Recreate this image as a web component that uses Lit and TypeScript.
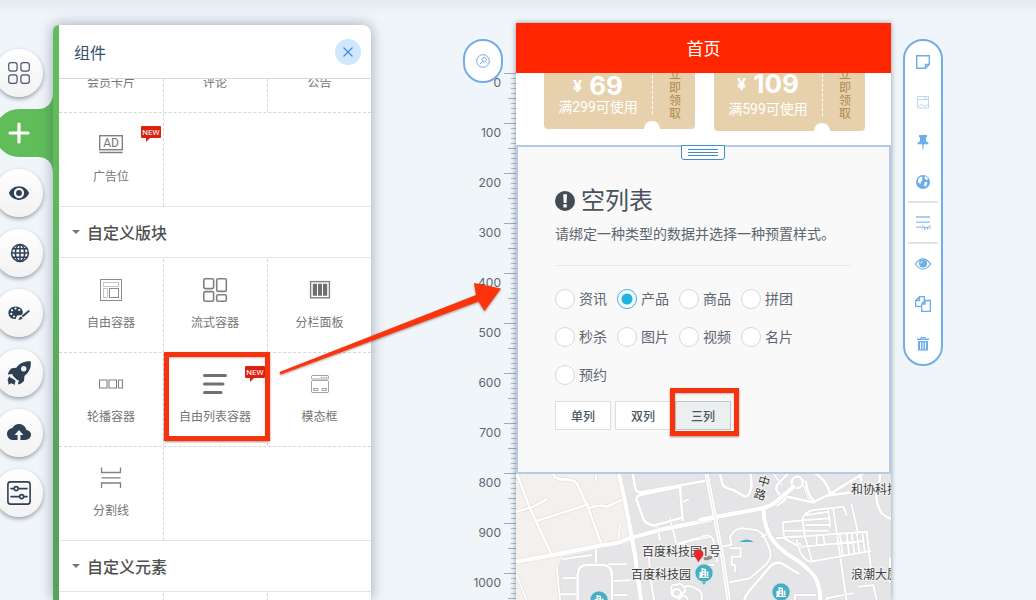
import { LitElement, html, css, svg, nothing } from "lit";
import { customElement, state } from "lit/decorators.js";

const FONT = css`Roboto, "Noto Sans CJK SC", sans-serif`;

const reset = css`
  *, *::before, *::after { box-sizing: border-box; }
  button { font: inherit; color: inherit; padding: 0; margin: 0; border: 0; background: none; cursor: pointer; }
  svg { display: block; overflow: visible; }
`;

/* ---------- left dock ---------- */

const dockIcons = [
  {
    name: "版块",
    art: svg`<g fill="none" stroke="#4a5768" stroke-width="1.2"><rect x="1.700" y="1.700" width="8.400" height="8.400" rx="2.400"/><rect x="13.900" y="1.700" width="8.400" height="8.400" rx="2.400"/><rect x="1.700" y="13.900" width="8.400" height="8.400" rx="2.400"/><rect x="13.900" y="13.900" width="8.400" height="8.400" rx="2.400"/></g>`,
  },
  {
    name: "添加组件",
    active: true,
    art: svg`<path d="M12 3v18M3 12h18" fill="none" stroke="#fff" stroke-width="3.200" stroke-linecap="round"/>`,
  },
  {
    name: "预览",
    art: svg`<path transform="translate(1 1) scale(.917)" d="M12 4.500C7 4.500 2.730 7.610 1 12c1.730 4.390 6 7.500 11 7.500s9.270-3.110 11-7.500c-1.730-4.390-6-7.500-11-7.500zM12 17.600a5.600 5.600 0 1 1 0-11.200 5.600 5.600 0 0 1 0 11.200zm0-8.800a3.200 3.200 0 1 0 0 6.400 3.200 3.200 0 0 0 0-6.400z"/>`,
  },
  {
    name: "站点",
    art: svg`<g fill="none" stroke="#2e4154" stroke-width="1.500"><circle cx="13" cy="12" r="8.400"/><ellipse cx="13" cy="12" rx="4.600" ry="8.400"/><path d="M13 3.600v16.800M4.600 12h16.800M5.600 7.800h14.800M5.600 16.200h14.800"/></g>`,
  },
  {
    name: "样式",
    art: svg`<path d="M8.600 5.400c-4.200 0-7.200 2.900-7.200 6.400 0 3.800 3.200 6.600 6.400 6.200 2-.2 1-2.100 2.100-3.100 1.300-1.100 4.200.2 5.700-2.100 1.200-3.600-2-7.400-7-7.400z"/><g fill="#fff"><circle cx="5" cy="9.300" r="1.100"/><circle cx="8.500" cy="7.600" r="1.100"/><circle cx="12.200" cy="9" r="1.100"/><circle cx="4.300" cy="12.900" r="1.100"/><circle cx="7" cy="15.500" r="1"/></g><path d="M22.400 9.400c.5.500.3.900 0 1.300l-6.300 5.500-1.400-1.400 6.300-5.200c.5-.5 1-.6 1.400-.2zM14.300 15.600l1.200 1.300c-.5 1.500-2.200 2.100-4.300 1.500 1.200-.6 1.200-2.500 3.100-2.800z"/>`,
  },
  {
    name: "发布",
    art: svg`<path fill-rule="evenodd" d="M23.800.3C17 0 12.400 2.400 9.300 6.700L4.900 7.200C3.600 7.600 1.300 11 .9 13.500l4.800-.5c-.3 1-.1 1.600.6 2.300l3.300 3.200c.7.700 1.300.9 2.200.6l-.9 4.500c2.700-.8 5.600-2.500 6.100-3.900l.5-4.800C21.900 11.700 24.400 7 23.800.3zM16.700 10.500a2.700 2.700 0 1 1 0-5.400 2.700 2.700 0 0 1 0 5.400z"/><path d="M2.600 15c-.6 1.700-2.600 2.600-1.600 5 .5 1.200.1 2 .6 3.800 1-1 1.700-1.300 2.900-1.300 1.300 0 2 1.300 3.600 1.200-.7-1-.2-1.500.2-2.500.5-1.300-.2-2.200-1.300-2.600-1.100-.4-1-1.300-2.200-1.400-1.200 0-1.800-1.200-2.200-2.200z"/>`,
  },
  {
    name: "上传",
    art: svg`<path d="M19.350 9.040C18.670 5.590 15.640 3 12 3 9.110 3 6.600 4.640 5.350 7.040 2.340 7.360 0 9.910 0 13c0 3.310 2.690 6 6 6h4.600v-5H7.600l4.400-5 4.400 5h-3v5H18c3.300 0 6-2.240 6-5.400 0-2.400-2.050-4.380-4.650-4.560z"/>`,
  },
  {
    name: "设置",
    art: svg`<g fill="none" stroke="#2e4154" stroke-width="1.600" stroke-linecap="round"><rect x=".9" y=".9" width="22.200" height="22.200" rx="2.600"/><path d="M4 7.600h2.800M11.600 7.600H20M4 15.600h8.400M17 15.600h3"/><circle cx="9.200" cy="7.600" r="2"/><circle cx="14.700" cy="15.600" r="2"/></g>`,
  },
];

@customElement("side-dock")
class SideDock extends LitElement {
  static styles = [
    reset,
    css`
      :host { display: block; width: 53px; flex: none; padding-top: 49px; }
      .list { display: flex; flex-direction: column; gap: 12px; margin-left: -5px; }
      .item {
        width: 48px; height: 48px; border-radius: 50%;
        display: grid; place-items: center;
        background: linear-gradient(#ffffff, #f2f2f3);
        box-shadow: 0 2px 4px rgba(40, 50, 70, 0.45);
        fill: #2e4154;
      }
      .item.active { background: none; box-shadow: none; width: 58px; padding-right: 10px; border-radius: 0; }
      .item > * { grid-area: 1 / 1; }
      .tab { justify-self: start; width: 58px; height: 48px; margin-right: -10px; }
    `,
  ];
  render() {
    return html`<nav class="list" aria-label="工具">
      ${dockIcons.map(
        (i) => html`<button class="item ${i.active ? "active" : ""}" aria-label=${i.name}>
          ${i.active
            ? html`<svg class="tab" viewBox="0 0 58 48"><path fill="#60bd5a" d="M24 0h19c9 0 15-6 15-16v80c0-10-6-16-15-16H24a24 24 0 0 1 0-48z" /></svg>`
            : nothing}
          <svg width="24" height="24" viewBox="0 0 24 24">${i.art}</svg>
        </button>`
      )}
    </nav>`;
  }
}

/* ---------- component panel ---------- */

type Cell = { label: string; art?: unknown; isNew?: boolean; marked?: boolean };

const line = (body: unknown, w = 1.4, color = "#808080") =>
  svg`<g fill="none" stroke="${color}" stroke-width="${w}">${body}</g>`;

const topRows: Cell[][] = [
  [{ label: "会员卡片" }, { label: "评论" }, { label: "公告" }],
  [
    {
      label: "广告位",
      isNew: true,
      art: svg`${line(svg`<rect x=".7" y="3.700" width="22.600" height="14"/><path d="M.5 20.500h23"/>`)}<text class="ad" x="12" y="15" text-anchor="middle">AD</text>`,
    },
  ],
];

const blockRows: Cell[][] = [
  [
    {
      label: "自由容器",
      art: svg`${line(svg`<rect x="1.500" y="1.500" width="21" height="21"/><rect x="10.500" y="10.500" width="9" height="9"/>`, 1, "#8c8c8c")}${line(svg`<path stroke-dasharray="1 1" d="M4.500 4.500h15v4h-15zM4.500 10.500h4v9h-4z"/>`, 1, "#8c8c8c")}`,
    },
    {
      label: "流式容器",
      art: line(svg`<rect x=".8" y=".8" width="9.800" height="9.800" rx="1.500"/><rect x="13.700" y=".8" width="9.600" height="12.600" rx="1.500"/><rect x=".8" y="13.600" width="9.800" height="9.600" rx="1.500"/><rect x="13.700" y="16.700" width="9.600" height="6.500" rx="1.500"/>`, 1.6),
    },
    {
      label: "分栏面板",
      art: svg`${line(svg`<rect x="2.600" y="3.600" width="18.800" height="16.200"/>`, 1.4)}<path fill="#6e6e6e" d="M4.800 5.800h4.200v12H4.800zM10 5.800h4v12h-4zM15 5.800h4.200v12H15z"/>`,
    },
  ],
  [
    {
      label: "轮播容器",
      art: line(svg`<path d="M.5 8h7.500v8H.5zM10 8h7.500v8H10zM19.500 8h4v8h-4z"/>`, 1.1),
    },
    {
      label: "自由列表容器",
      isNew: true,
      marked: true,
      art: svg`<path d="M1.500 3.500h21M1.500 12H20M1.500 20.500h16.500" stroke="#707070" stroke-width="3" stroke-linecap="round"/>`,
    },
    {
      label: "模态框",
      art: line(svg`<rect x="3.500" y="3.500" width="17" height="3.500" rx="1"/><rect x="3.500" y="8.500" width="17" height="12" rx="1"/><path d="M5.500 16.500h4.500v2H5.500zM14 16.500h4.500v2H14zM13 5.300h1.500M15.600 5.300h1.500M18 5.300h1.400"/>`, 0.8, "#8c8c8c"),
    },
  ],
  [
    {
      label: "分割线",
      art: line(svg`<path d="M2.500 1.500v5h19v-5M2.500 22v-5h19v5M2.500 11.800h19"/>`, 1.3),
    },
  ],
];

const elementRows: Cell[][] = [[{ label: "" }, { label: "" }, { label: "" }]];

@customElement("component-panel")
class ComponentPanel extends LitElement {
  static styles = [
    reset,
    css`
      :host {
        display: flex; flex: none; width: 318px; margin-top: 25px; padding-left: 6px; overflow: hidden;
        border-radius: 6px 8px 0 0; position: relative;
        background: linear-gradient(#60bd5a 20%, #54a45b 75%);
        box-shadow: 0 0 14px rgba(50, 70, 105, 0.45);
      }
      .sheet { flex: 1; background: #fff; display: flex; flex-direction: column; min-width: 0; }
      .head {
        height: 54px; flex: none; display: flex; align-items: center; justify-content: space-between;
        padding: 0 10px 0 15px; border-bottom: 1px solid #d3d9e2;
      }
      .head h1 { margin: 0; font-size: 16px; font-weight: 400; color: #34506c; }
      .close { width: 26px; height: 26px; border-radius: 50%; background: #cfe8fd; display: grid; place-items: center; }
      .body { flex: 1; overflow: hidden; min-height: 0; }
      .scrolled { margin-top: -60px; }
      .row {
        display: grid; grid-template-columns: repeat(3, 1fr); height: 94px;
        border-bottom: 1px dashed #d6d6d6;
      }
      .row:last-child { border-bottom: 1px solid #e2e4e7; }
      .cell {
        position: relative; display: flex; flex-direction: column; align-items: center; gap: 13px;
        padding-top: 19px; margin-right: -1px; border-right: 1px dashed #d6d6d6;
        font-size: 12px; line-height: 16px; color: #757575;
      }
      .cell:nth-child(3) { border-right: 0; }
      .icon { width: 24px; height: 24px; }
      .ad { font-size: 12px; fill: #757575; }
      .new {
        position: absolute; right: 2px; top: 13px; width: 20px; height: 12px; border-radius: 1px;
        background: #d8220f; color: #fff; font-size: 8px; line-height: 13px; text-align: center;
      }
      .new::after {
        content: ""; position: absolute; left: 5px; top: 12px;
        border-top: 4px solid #d8220f; border-right: 4px solid transparent;
      }
      .marker {
        position: absolute; inset: -1px -3px 5px 1px; border: 5px solid #f5330f;
        box-shadow: 0 1px 2px rgba(90, 30, 20, 0.5), inset 0 1px 2px rgba(90, 30, 20, 0.3);
      }
      h2 {
        margin: 0; height: 51px; display: flex; align-items: center; gap: 7px; padding-left: 13px;
        border-bottom: 1px solid #e2e4e7; font-size: 16px; font-weight: 500; color: #505050;
      }
      h2::before { content: ""; border: 4px solid transparent; border-top-color: #777; border-bottom: 0; }
      .group { padding-top: 1px; }
    `,
  ];

  private rows(rows: Cell[][]) {
    return rows.map(
      (r) => html`<div class="row">
        ${r.map(
          (c) => html`<button class="cell">
            <svg class="icon" viewBox="0 0 24 24">${c.art ?? nothing}</svg>
            <span>${c.label}</span>
            ${c.isNew ? html`<span class="new">NEW</span>` : nothing}
            ${c.marked ? html`<span class="marker"></span>` : nothing}
          </button>`
        )}
      </div>`
    );
  }

  render() {
    return html`<section class="sheet">
      <header class="head">
        <h1>组件</h1>
        <button class="close" aria-label="关闭">
          <svg width="10" height="10" viewBox="0 0 10 10"><path d="M.5.5l9 9M9.500.5l-9 9" stroke="#3f8fdc" stroke-width="1.200" /></svg>
        </button>
      </header>
      <div class="body">
        <div class="scrolled">${this.rows(topRows)}</div>
        <h2>自定义版块</h2>
        <div class="group">${this.rows(blockRows)}</div>
        <h2>自定义元素</h2>
        <div class="group">${this.rows(elementRows)}</div>
      </div>
    </section>`;
  }
}

/* ---------- ruler ---------- */

@customElement("page-ruler")
class PageRuler extends LitElement {
  static styles = [
    reset,
    css`
      :host { display: flex; flex-direction: column; align-items: flex-end; height: 100%; }
      .zoom {
        flex: none; width: 40px; height: 44px; border-radius: 20px; border: 2px solid #74ade5; background: #fff;
        display: grid; place-items: center; margin: 39px 13px 0 0;
      }
      .scale {
        flex: 1; min-height: 0; width: 46px; margin: -10px 0 0; padding: 1px 15px 0 0; overflow: hidden;
        font: 12px/18px Inter, sans-serif; color: #5d6670; text-align: right;
        background:
          repeating-linear-gradient(#a3abb3 0 1px, transparent 1px 50px) right / 12px 100% no-repeat,
          repeating-linear-gradient(#a3abb3 0 1px, transparent 1px 25px) right / 8px 100% no-repeat,
          repeating-linear-gradient(#b3bac2 0 1px, transparent 1px 5px) right / 5px 100% no-repeat;
      }
      .mark { height: 50px; }
    `,
  ];
  render() {
    return html`<button class="zoom" aria-label="缩放">
        <svg width="14" height="14" viewBox="0 0 14 14" fill="none" stroke="#74ade5" stroke-width="1">
          <circle cx="7" cy="7" r="6.300" /><circle cx="8.200" cy="5.700" r="2.200" /><path d="M6.600 7.300L4 10" />
        </svg>
      </button>
      <div class="scale">${Array.from({ length: 11 }, (_, i) => html`<div class="mark">${i * 100}</div>`)}</div>`;
  }
}

/* ---------- map ---------- */

@customElement("city-map")
class CityMap extends LitElement {
  static styles = css`
    :host { display: block; height: 260px; background: #e5e5e7; overflow: hidden; }
    svg { display: block; }
    .road { fill: none; stroke: #fff; stroke-linejoin: round; stroke-linecap: round; }
    .edge { fill: none; stroke: #d9d9dc; stroke-linejoin: round; stroke-linecap: round; }
    text { font-size: 12px; fill: #3c3c3c; stroke: #f4f4f4; stroke-width: 2px; paint-order: stroke; }
  `;

  private roads(d: string, w: number) {
    return svg`<path class="edge" stroke-width="${w + 3}" d="${d}"/><path class="road" stroke-width="${w}" d="${d}"/>`;
  }

  private pin(x: number, y: number) {
    return svg`<g transform="translate(${x} ${y})">
      <path fill="#3fa7bd" stroke="#bfe0e8" stroke-width=".6" d="M-3 8L0 12 3 8z"/>
      <circle r="9" fill="#48aec4" stroke="#d2eaf0" stroke-width=".6"/>
      <path fill="#fff" fill-rule="evenodd" d="M-2.500-5L2-4V4H5V5H-5V4H-4.500V-1H-2.500zM-1.200-3v1.300H.6V-3zM-1.200-.5V.8H.6V-.5zM-1.200 2v2H.6V2zM2.600-1.500H4.400V3.500H2.600z"/></g>`;
  }

  render() {
    return html`<svg width="375" height="260" viewBox="0 0 375 260" role="img" aria-label="地图">
      <g transform="translate(-6 -9) scale(.33333)">
        <path fill="#f3f0ee" d="M18 25H325L365 232 280 250 160 275Q142 290 145 330L150 820H18z" />
        ${this.roads("M20 330L50 405M140 305L150 405M160 282L245 270M258 245V300M160 340L200 338M155 388H200M295 298H350M308 348L360 346M308 390H350M330 180L325 225M415 240L420 330 432 405M440 175L450 225M480 160L500 240M510 115L535 103M258 25V47", 6)}
        ${this.roads("M20 25L60 130 125 270M20 140L70 125 110 103M80 168L235 118M130 25Q130 45 175 44 200 45 205 65L235 130 275 240M240 128Q270 118 290 125L335 105M203 480V330Q205 300 230 300H280Q305 302 306 330V480M368 25L375 65Q376 80 390 82L600 45M515 158L430 182Q400 175 398 155L380 105Q378 90 400 88L510 65 518 165M500 240Q550 220 600 215", 8)}
        ${this.roads("M20 290L130 270 280 240Q330 235 350 222L450 195 600 165M325 20L345 110 375 270 395 420", 13)}
        ${this.roads("M485 375Q480 355 500 360 510 350 520 365 535 380 515 385 520 400 500 398 480 395 485 375M520 365Q545 360 555 370 580 375 575 405M500 372A12 12 0 1 0 501 372M520 392A12 12 0 1 0 521 392", 6)}
      </g>
      <g transform="translate(184 -9) scale(.33333)">
        ${this.roads("M90 215Q105 190 125 190L170 195 185 205Q215 250 211 275 205 295 190 305L150 340 90 352M90 215L95 240 60 245M185 215L205 205M90 250H122V275H95V300H105V320M220 25L245 60M310 60L330 110M5 215Q30 205 40 225L45 260M10 300H40M285 405V390H345M380 420V400L460 385M475 365L520 360 530 405M570 280V350M300 235V260M50 250V290", 6)}
        ${this.roads("M250 172L315 165M250 197H385M250 217L305 214M318 165L390 160M318 180H390M320 150L385 140M250 170Q245 190 255 222L290 240M315 220L308 165Q310 142 340 135L430 125 440 150M385 135L390 185M400 133L420 270 440 410M455 120L473 200M230 220L500 200 514 320M290 225Q300 280 330 290L512 258M305 245L490 228M318 225L335 285M350 215V240M420 210L428 268M440 208L447 265M455 206L463 262M470 204L478 260M487 203L494 258M370 215L375 240", 6)}
        ${this.roads("M60 25L68 60Q75 70 100 75L135 95Q150 95 155 60L152 25M215 118Q235 112 240 90 220 70 235 55L265 25M215 120Q240 125 260 95L340 112 380 92 470 80Q490 55 480 25M345 25Q380 45 390 85M318 50Q320 90 345 110M385 90L490 25M540 25Q540 55 530 80 525 110 545 145 560 160 590 165M130 420Q130 400 150 375L210 305Q230 285 250 298L295 325", 8)}
        <circle class="edge" cx="292" cy="52" r="17" stroke-width="11" /><circle class="road" cx="292" cy="52" r="17" stroke-width="8" />
        ${this.roads("M0 165L185 130Q215 125 240 100L280 66M18 20L40 130 68 280 88 420M190 128Q190 190 225 235 260 270 290 285 340 320 352 350 362 380 362 420", 13)}
        <path d="M18 20L40 130 68 280 88 420" fill="none" stroke="#d6d6d9" stroke-width="1.500" />
      </g>
      <path d="M223 68q7.500-5 15 0z" fill="#48aec4" />
      <ellipse cx="192" cy="84" rx="4.500" ry="2" fill="#8f8f8f" transform="rotate(-12 192 84)" />
      <text x="126" y="82">百度科技园1号</text>
      <text x="115" y="105">百度科技园</text>
      <text x="335" y="20">和协科技大厦</text>
      <text x="335" y="105">浪潮大厦</text>
      <text transform="translate(241 10) rotate(16)">中</text>
      <text transform="translate(237 23) rotate(16)">路</text>
      ${this.pin(188, 99)} ${this.pin(265, 118)} ${this.pin(83, 126)}
      <path d="M182.500 88.500C181 85 178 83 178 80a4.700 4.700 0 0 1 9.400 0c0 3-3.400 5-4.900 8.500z" fill="#e8262b" />
    </svg>`;
  }
}

/* ---------- phone preview ---------- */

@customElement("phone-preview")
class PhonePreview extends LitElement {
  @state() private kind = "产品";
  @state() private columns = "三列";

  static styles = [
    reset,
    css`
      :host {
        display: flex; flex-direction: column; width: 375px; margin-top: 23px; background: #fff;
        box-shadow: 0 0 5px rgba(50, 60, 80, 0.5); overflow: hidden;
      }
      .bar {
        flex: none; height: 50px; padding-bottom: 2px; background: #ff2600; color: #fff; display: grid; place-items: center;
        font-size: 17px;
      }
      .bar h1 { margin: 0; font: inherit; }
      .coupons { flex: none; height: 72px; overflow: hidden; display: flex; align-items: flex-end; gap: 19px; padding: 0 26px 16px 28px; }
      .coupon {
        position: relative; flex: 1; height: 84px; display: flex; background: #e7d1ac; border-radius: 4px; color: #fff;
      }
      .coupon.low { margin-bottom: -2px; height: 86px; }
      .value { flex: 1; display: flex; flex-direction: column; justify-content: flex-end; align-items: center; padding-bottom: 12px; }
      .amount { font: 700 26px/22px Inter, sans-serif; display: flex; align-items: center; gap: 7px; }
      .low .amount { margin-bottom: 4px; }
      .yen { font-size: 16px; }
      .rule { font-size: 14px; line-height: 20px; }
      .take {
        width: 43px; border-left: 1px dashed #fff; margin-bottom: 15px; padding: 24px 14px 0 16px;
        font-size: 12px; line-height: 13px; color: #ae8a4f; text-align: center; word-break: break-all;
      }
      .coupon::after {
        content: ""; position: absolute; right: 35px; bottom: -8px; width: 16px; height: 16px; border-radius: 50%; background: #fff;
      }
      .block {
        position: relative; flex: none; border: 2px solid #b3cbe7; background: #f9f9f9; padding: 37px 38px 42px 37px; color: #5c6670;
      }
      .grip {
        position: absolute; left: 50%; top: -2px; margin-left: -23px; width: 44px; height: 15px; background: #fff;
        border: 1px solid #3d8fc4; border-radius: 0 0 3px 3px;
        display: flex; flex-direction: column; justify-content: center; gap: 2px; padding: 0 6px;
      }
      .grip i { height: 1px; background: #3d8fc4; }
      .title { display: flex; align-items: center; gap: 6px; margin: 0; font-size: 24px; line-height: 34px; font-weight: 400; color: #48535c; }
      .hint { margin: 6px 0 0; font-size: 14px; line-height: 20px; }
      hr { margin: 21px 0 23px; border: 0; border-top: 1px solid #e9e9e9; }
      .kinds { display: flex; flex-wrap: wrap; gap: 18px 10px; margin: 0; padding: 0; border: 0; }
      .kinds label { display: flex; align-items: center; gap: 4px; font-size: 14px; line-height: 20px; }
      .kinds input {
        appearance: none; margin: 0; width: 20px; height: 20px; border-radius: 50%;
        border: 1px solid #d2d9dd; background: #fff;
      }
      .kinds input:checked { border-color: #2bb3e3; background: radial-gradient(circle, #21b2e4 5px, #fff 6px); }
      .cols { display: flex; gap: 4px; margin-top: 16px; }
      .cols button {
        position: relative; width: 56px; height: 29px; border: 1px solid #dadfe2; background: #fff;
        font-size: 12px; font-weight: 500; color: #4c565e;
      }
      .cols .on { background: #ebeff0; border-color: #bcc7cb; }
      .marker {
        position: absolute; inset: -14px -9px -7px -6px; border: 5px solid #f5330f;
        box-shadow: 0 1px 2px rgba(90, 30, 20, 0.5), inset 0 1px 2px rgba(90, 30, 20, 0.3);
      }
    `,
  ];

  private coupon(price: string, rule: string, low = false) {
    return html`<div class="coupon ${low ? "low" : ""}">
      <div class="value">
        <div class="amount"><span class="yen">¥</span><span>${price}</span></div>
        <div class="rule">${rule}</div>
      </div>
      <div class="take">立即领取</div>
    </div>`;
  }

  render() {
    const kinds = ["资讯", "产品", "商品", "拼团", "秒杀", "图片", "视频", "名片", "预约"];
    return html`<header class="bar"><h1>首页</h1></header>
      <div class="coupons">${this.coupon("69", "满299可使用")}${this.coupon("109", "满599可使用", true)}</div>
      <section class="block">
        <div class="grip"><i></i><i></i><i></i></div>
        <h2 class="title">
          <svg width="20" height="20" viewBox="0 0 20 20"><circle cx="10" cy="10" r="10" fill="#414c55" /><path d="M8.200 3.200h3.800l-.5 8.700H8.700zM8.400 13.300h3.400v3.200H8.400z" fill="#fff" /></svg>
          空列表
        </h2>
        <p class="hint">请绑定一种类型的数据并选择一种预置样式。</p>
        <hr />
        <div class="kinds" role="radiogroup">
          ${kinds.map(
            (k) => html`<label><input type="radio" name="kind" .checked=${this.kind === k} @change=${() => (this.kind = k)} />${k}</label>`
          )}
        </div>
        <div class="cols">
          ${["单列", "双列", "三列"].map(
            (c) => html`<button class=${this.columns === c ? "on" : ""} @click=${() => (this.columns = c)}>
              ${c}${c === "三列" ? html`<span class="marker"></span>` : nothing}
            </button>`
          )}
        </div>
      </section>
      <city-map></city-map>`;
  }
}

/* ---------- right tool bar ---------- */

const tools = [
  { name: "便签", art: svg`<path fill="none" stroke="#6dade8" stroke-width="1.400" d="M1.700 1.700h12.600v8.800l-3.800 3.800H1.700zM14.300 10.500h-3.800v3.800"/>` },
  { name: "弹窗", art: svg`<g fill="none" stroke="#bcd8f2" stroke-width="1"><path d="M2.500 2.500h11v11.500h-11zM2.500 5.500h11M3 12.500q3-3.500 5-1t5-1"/><path stroke-width="1.500" d="M9 4h1M11 4h1"/></g>` },
  { name: "固定", art: svg`<path d="M4 1h8v2.200h-1v4c1.600.6 2.500 1.700 2.600 3.100H8.800L8.300 15.500h-.6L7.200 10.300H2.400c.1-1.400 1-2.500 2.600-3.100v-4H4z"/>` },
  { name: "全局", art: svg`<circle cx="8" cy="8" r="7"/><path fill="#fff" d="M3.600 4.200l2.500-1.700 1.600.9-1 1.700 1 .9-2 1.800.2 1.900-1.900-.5-1.200-2zM9.800 2l2.600 1.500.8 1.600-1.700.8-1.900-1.400zM9.800 8l2.500.2-.3 2.600-2.100 2-.8-1.900z"/>`, end: true },
  { name: "隐藏列表", art: svg`<g fill="none" stroke="#8fbfec" stroke-width="1.300"><path d="M1 2h14M1 7.200h14M1 12.200h5.500"/><path stroke="#6dade8" stroke-width="1" d="M7 10.500q4 4.500 8.500 0M8 12l-1 1.700M10 13l-.4 1.800M12.600 13l.4 1.800M14.500 11.800l1.200 1.700"/></g>`, end: true },
  { name: "查看", art: svg`<path fill="#fff" stroke="#6dade8" stroke-width="1.200" d="M.4 8Q8-2.400 15.600 8 8 18.400.4 8z"/><circle cx="8" cy="7.600" r="4"/><path fill="none" stroke="#fff" stroke-width=".9" d="M5.800 7.600A2.200 2.200 0 0 1 7.800 5.500"/>` },
  { name: "复制", art: svg`<g fill="#fff" stroke="#6dade8" stroke-width="1.300"><path d="M4.500.7h4.800v9.600H.7V4.500zM4.500.7v3.800H.7"/><path d="M10 4.500h5.300v10.800H6.700V8zM10 4.500V8H6.700"/></g>` },
  { name: "删除", art: svg`<path fill-rule="evenodd" d="M5.500 1h5v1.500H14V4H2V2.500h3.500zM6.500 2v.6h3V2zM3 5h10v9.500H3zM5 6.200v7h1v-7zM7.500 6.200v7h1v-7zM10 6.200v7h1v-7z"/>` },
];

@customElement("tool-strip")
class ToolStrip extends LitElement {
  static styles = [
    reset,
    css`
      :host { display: block; margin: 39px 0 0 12px; }
      .strip {
        width: 40px; border: 2px solid #74ade5; border-radius: 20px; background: #fff; padding: 1px 3px 0;
        display: flex; flex-direction: column; fill: #6dade8;
      }
      .tool { height: 40px; display: grid; place-items: center; }
      .tool.end { height: 41px; border-bottom: 2px solid #e2e2e2; }
    `,
  ];
  render() {
    return html`<div class="strip" role="toolbar">
      ${tools.map(
        (t) => html`<button class="tool ${t.end ? "end" : ""}" aria-label=${t.name}>
          <svg width="16" height="16" viewBox="0 0 16 16">${t.art}</svg>
        </button>`
      )}
    </div>`;
  }
}

/* ---------- page ---------- */

@customElement("app-root")
class AppRoot extends LitElement {
  static styles = [
    reset,
    css`
      :host {
        display: flex; position: relative; height: 100vh; overflow: hidden; font-family: ${FONT};
        background: linear-gradient(#e5eaee, #f0f5f9 16px);
      }
      .work { flex: 1; min-width: 0; display: grid; grid-template-columns: 1fr auto 1fr; grid-template-rows: 100vh; }
      .tools { display: flex; align-items: flex-start; }
      .arrow { position: absolute; left: 278px; top: 280px; filter: drop-shadow(0 1px 1px rgba(90, 40, 20, 0.5)); }
    `,
  ];
  render() {
    return html`<side-dock></side-dock>
      <component-panel></component-panel>
      <main class="work">
        <page-ruler></page-ruler>
        <phone-preview></phone-preview>
        <div class="tools"><tool-strip></tool-strip></div>
      </main>
      <svg class="arrow" width="226" height="98" viewBox="0 0 226 98" fill="#fb340d">
        <path d="M1.500 92L198 15 196 3 223 8.500 206.500 31 200.500 21.500 2.500 94.500z" />
      </svg>`;
  }
}
